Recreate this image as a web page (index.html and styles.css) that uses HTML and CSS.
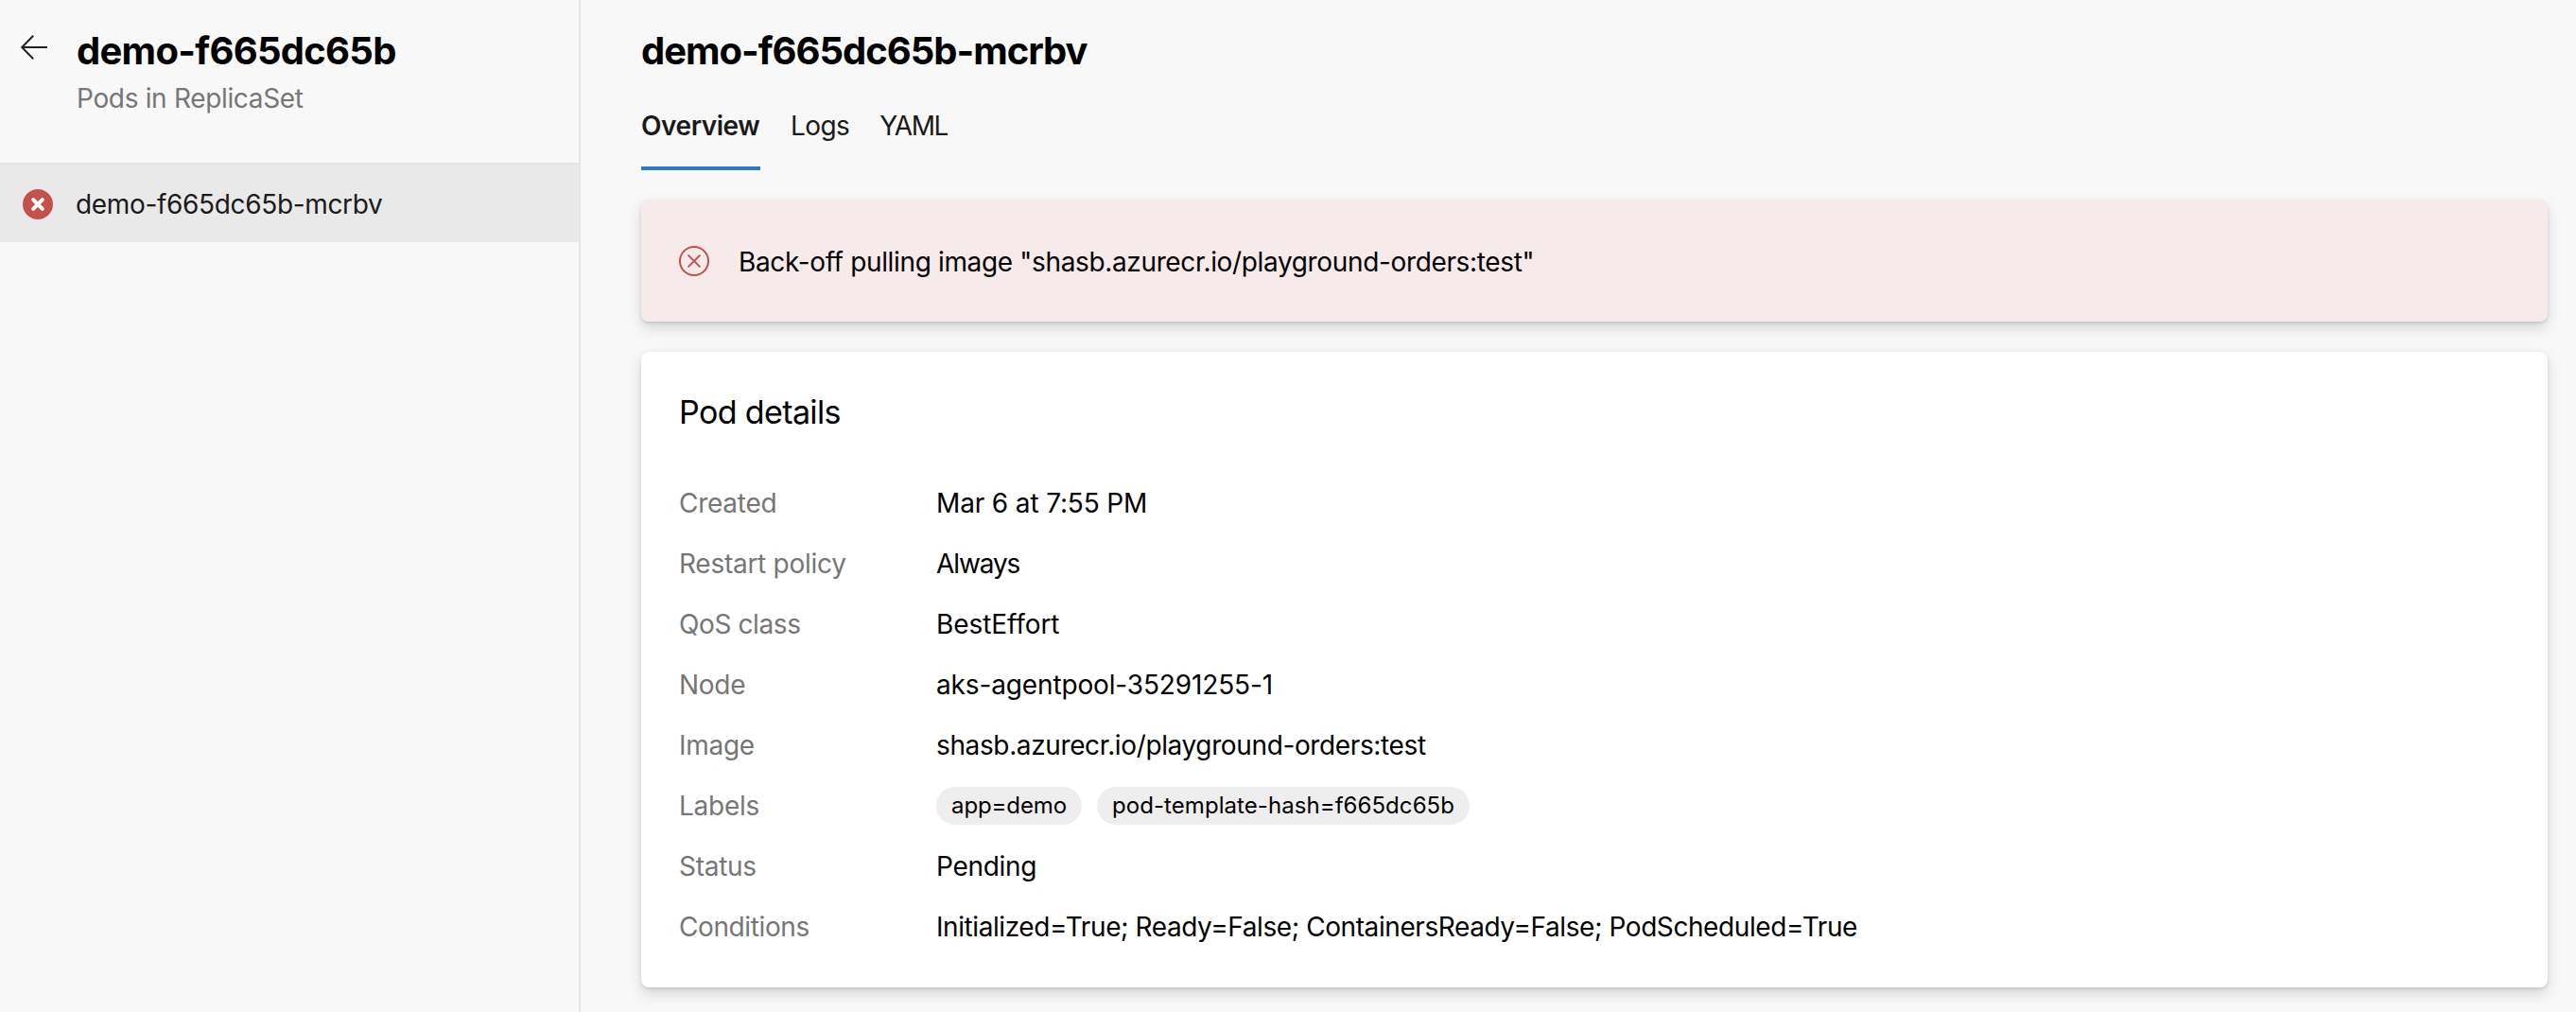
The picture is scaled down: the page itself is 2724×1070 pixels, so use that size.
FILE: index.html
```html
<!DOCTYPE html>
<html lang="en">
<head>
<meta charset="utf-8">
<title>demo-f665dc65b-mcrbv</title>
<link rel="stylesheet" href="styles.css">
</head>
<body>
<div class="page">
  <aside class="sidebar">
    <header class="sidebar-header">
      <svg class="back" width="32" height="32" viewBox="0 0 32 32" fill="none" stroke="#222" stroke-width="2"><path d="M30 16H3.5M15.2 3.8L3.2 16L15.2 28.2"/></svg>
      <div>
        <h1 class="title title-set">demo-f665dc65b</h1>
        <p class="subtitle">Pods in ReplicaSet</p>
      </div>
    </header>
    <div class="pod-item">
      <svg width="32" height="32" viewBox="0 0 32 32"><circle cx="16" cy="16" r="16" fill="#c2534c"/><path d="M11.2 11.2L20.8 20.8M20.8 11.2L11.2 20.8" stroke="#fff" stroke-width="4" stroke-linecap="round"/></svg>
      <span>demo-f665dc65b-mcrbv</span>
    </div>
  </aside>
  <main class="main">
    <h1 class="title title-pod">demo-f665dc65b-mcrbv</h1>
    <nav class="tabs">
      <a class="tab tab-active">Overview</a>
      <a class="tab tab-logs">Logs</a>
      <a class="tab tab-yaml">YAML</a>
    </nav>
    <section class="banner">
      <svg width="32" height="32" viewBox="0 0 32 32" fill="none" stroke="#c5504a" stroke-width="2"><circle cx="16" cy="16" r="15"/><path d="M9.6 9.6L22.4 22.4M22.4 9.6L9.6 22.4"/></svg>
      <span class="banner-text">Back-off pulling image "shasb.azurecr.io/playground-orders:test"</span>
    </section>
    <section class="card">
      <h2 class="card-title">Pod details</h2>
      <dl class="details">
        <dt>Created</dt><dd class="created">Mar 6 at 7:55 PM</dd>
        <dt>Restart policy</dt><dd class="policy">Always</dd>
        <dt class="tight">QoS class</dt><dd class="qos">BestEffort</dd>
        <dt>Node</dt><dd class="node">aks-agentpool-35291255-1</dd>
        <dt>Image</dt><dd class="image">shasb.azurecr.io/playground-orders:test</dd>
        <dt>Labels</dt><dd class="labels"><span class="chip">app=demo</span><span class="chip chip-hash">pod-template-hash=f665dc65b</span></dd>
        <dt>Status</dt><dd class="status">Pending</dd>
        <dt class="tight">Conditions</dt><dd class="conditions">Initialized=True; Ready=False; ContainersReady=False; PodScheduled=True</dd>
      </dl>
    </section>
  </main>
</div>
</body>
</html>
```
FILE: styles.css
```css
* {
  box-sizing: border-box;
  margin: 0;
}

body {
  background: #f8f8f8;
  color: #000;
  font: 400 28px/34px Inter, "Liberation Sans", sans-serif;
}

svg {
  display: block;
  flex: none;
}

.page {
  display: flex;
  height: 1070px;
  overflow: hidden;
  white-space: nowrap;
}

.sidebar {
  flex: none;
  width: 614px;
  border-right: 2px solid #e4e4e4;
}

.sidebar-header {
  display: flex;
  gap: 29px;
  height: 172px;
  padding: 29px 20px 0;
}

.back {
  margin-top: 5px;
}

.title {
  font-size: 40px;
  font-weight: 700;
  line-height: 49px;
}

.title-set {
  letter-spacing: -0.72px;
}

.title-pod {
  letter-spacing: -1.02px;
}

.subtitle {
  margin-top: 9px;
  color: #767676;
  letter-spacing: -0.33px;
}

.pod-item {
  display: flex;
  align-items: center;
  gap: 24px;
  height: 84px;
  padding: 24px 24px 22px;
  border-top: 2px solid #e4e4e4;
  background: #e9e9e9;
  color: #1a1a1a;
  letter-spacing: -0.34px;
}

.main {
  flex: 1;
  padding: 29px 30px 0 64px;
}

.tabs {
  display: flex;
  gap: 32px;
  margin-top: 38px;
  color: #1a1a1a;
}

.tab {
  padding-bottom: 26px;
  border-bottom: 4px solid transparent;
}

.tab-active {
  width: 126px;
  border-color: #3078cd;
  font-weight: 600;
  letter-spacing: -0.45px;
}

.tab-logs {
  letter-spacing: -0.6px;
}

.tab-yaml {
  letter-spacing: -1.4px;
}

.banner,
.card {
  border-radius: 8px;
  box-shadow: 0 6.4px 14.4px rgba(0, 0, 0, 0.132), 0 1.2px 3.6px rgba(0, 0, 0, 0.108);
}

.banner {
  display: flex;
  align-items: center;
  gap: 31px;
  height: 128px;
  margin-top: 32px;
  padding: 0 40px;
  background: #f6eaea;
}

.banner-text {
  padding-top: 2px;
  letter-spacing: -0.35px;
}

.card {
  height: 672px;
  margin-top: 32px;
  padding: 44px 40px 32px;
  background: #fff;
}

.card-title {
  font-size: 34px;
  font-weight: 400;
  line-height: 40px;
  letter-spacing: -0.62px;
}

.details {
  display: grid;
  grid-template-columns: 272px 1fr;
  grid-auto-rows: 64px;
  align-items: center;
  margin-top: 44px;
}

dt {
  color: #767676;
  letter-spacing: -0.27px;
}

.tight {
  letter-spacing: -0.39px;
}

.created,
.node {
  letter-spacing: -0.14px;
}

.policy {
  letter-spacing: -1.1px;
}

.qos {
  letter-spacing: -0.08px;
}

.image {
  letter-spacing: -0.37px;
}

.status {
  letter-spacing: -0.3px;
}

.conditions {
  letter-spacing: -0.42px;
}

.labels {
  display: flex;
  gap: 16px;
}

.chip {
  height: 40px;
  padding: 0 16px;
  border-radius: 20px;
  background: #eee;
  font-size: 24px;
  line-height: 40px;
  letter-spacing: -0.1px;
}

.chip-hash {
  letter-spacing: 0.06px;
}
```
